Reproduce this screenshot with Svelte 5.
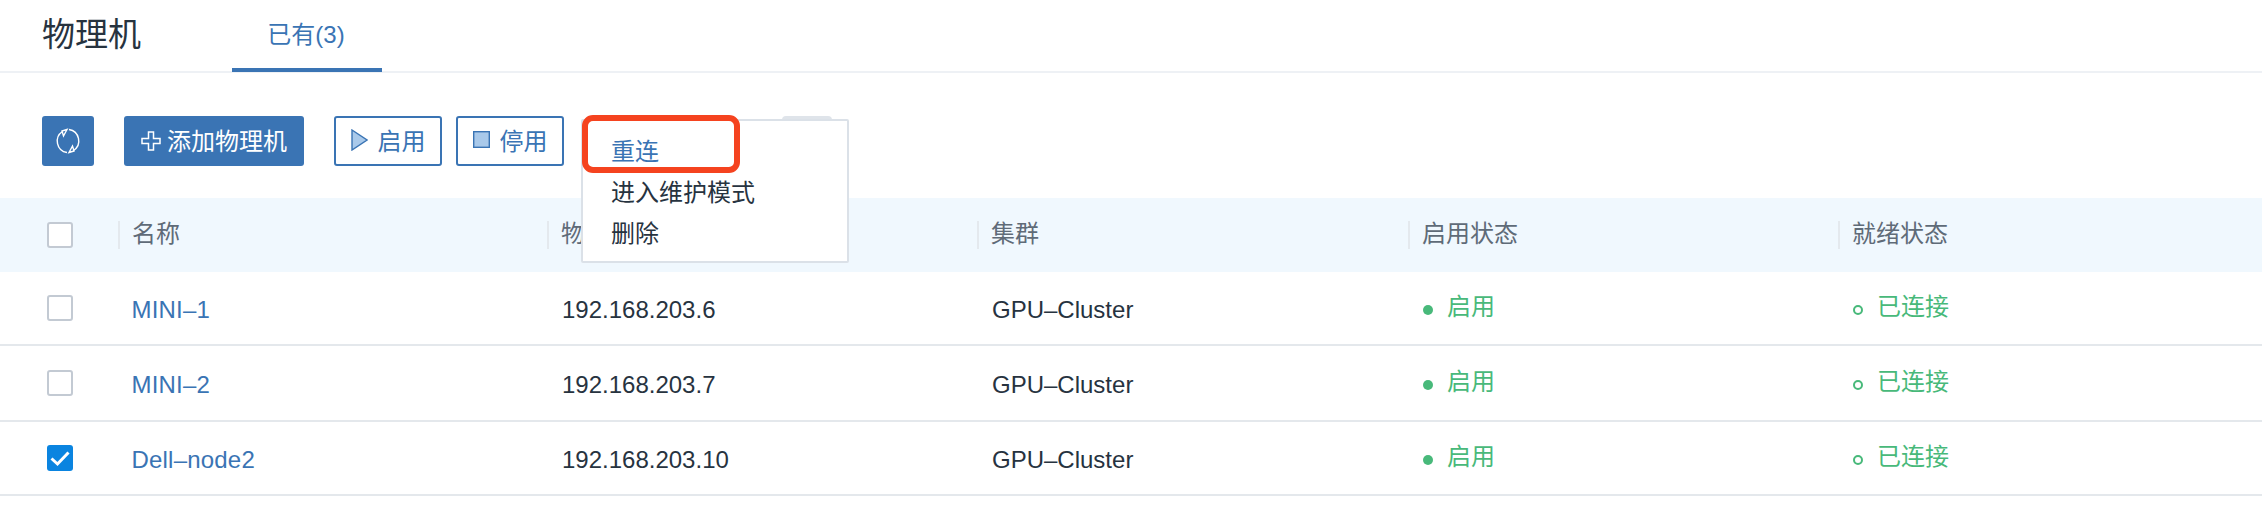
<script>
  const columns = ['名称', '物理机IP', '集群', '启用状态', '就绪状态']
  const hosts = [
    { name: 'MINI–1', ip: '192.168.203.6', checked: false },
    { name: 'MINI–2', ip: '192.168.203.7', checked: false },
    { name: 'Dell–node2', ip: '192.168.203.10', checked: true },
  ]
  const menu = ['重连', '进入维护模式', '删除']
</script>

<div class="page">
  <header class="head">
    <h1>物理机</h1>
    <div class="tab">已有(3)</div>
  </header>

  <div class="toolbar">
    <button class="btn solid refresh" aria-label="刷新">
      <svg width="26" height="26" viewBox="0 0 26 26" fill="none" stroke="#fff" stroke-width="1.4">
        <path d="M7.500 3.500A11.500 11.500 0 0 0 12 24.500" />
        <path d="M18.500 22.500A11.500 11.500 0 0 0 14 1.500" />
        <path d="M12 1.500 7 3 8.500 8z" />
        <path d="M14 24.500 19 23 17.500 18z" />
      </svg>
    </button>
    <button class="btn solid add">
      <svg width="20" height="20" viewBox="0 0 20 20" fill="none" stroke="#fff" stroke-width="1.500">
        <path d="M7.500 1h5v6.500H19v5h-6.500V19h-5v-6.500H1v-5h6.500z" />
      </svg>
      <span>添加物理机</span>
    </button>
    <button class="btn outline">
      <svg width="17" height="22" viewBox="0 0 17 22"><path d="M1 1 16 11 1 21z" fill="#a9c9ea" stroke="#3a74b4" stroke-width="1.400" /></svg>
      <span>启用</span>
    </button>
    <button class="btn outline">
      <svg width="17" height="17" viewBox="0 0 17 17"><rect x="0.700" y="0.700" width="15.600" height="15.600" fill="#a9c9ea" stroke="#3a74b4" stroke-width="1.400" /></svg>
      <span>停用</span>
    </button>
    <div class="more-edge"></div>
    <div class="menu">
      {#each menu as item, i}
        <div class="item" class:active={i === 0}>{item}</div>
      {/each}
    </div>
    <div class="mark"></div>
  </div>

  <div class="table">
    <div class="row th">
      <div class="check-cell"><span class="check"></span></div>
      {#each columns as col}
        <div class="cell"><span class="label">{col}</span></div>
      {/each}
    </div>
    {#each hosts as host}
      <div class="row">
        <div class="check-cell">
          <span class="check" class:on={host.checked}>
            {#if host.checked}
              <svg width="26" height="26" viewBox="0 0 26 26" fill="none" stroke="#fff" stroke-width="3"><path d="M4.500 13.500 10.500 19 21.500 7.500" /></svg>
            {/if}
          </span>
        </div>
        <div class="cell latin"><a href="#host">{host.name}</a></div>
        <div class="cell latin">{host.ip}</div>
        <div class="cell latin">GPU–Cluster</div>
        <div class="cell green"><i class="dot"></i><span class="label">启用</span></div>
        <div class="cell green"><i class="dot ring"></i><span class="label">已连接</span></div>
      </div>
    {/each}
  </div>
</div>

<style>
  :global(body) { margin: 0; background: #fff; }
  .page { font-family: "Liberation Sans", "Noto Sans CJK SC", sans-serif; font-size: 24px; color: #27333f; height: 510px; overflow: hidden; }

  .head { display: flex; align-items: flex-start; height: 71px; border-bottom: 2px solid #eef1f5; padding-left: 42px; }
  h1 { margin: 0; font-size: 33px; font-weight: 400; line-height: 70px; width: 190px; }
  .tab { width: 150px; height: 72px; box-sizing: border-box; border-bottom: 4px solid #3a74b4; padding-right: 2px; color: #3a74b4; text-align: center; line-height: 70px; }

  .toolbar { position: relative; display: flex; gap: 14px; padding: 43px 0 32px 42px; height: 50px; }
  .btn { display: flex; align-items: center; justify-content: center; height: 50px; box-sizing: border-box; border-radius: 3px; font: inherit; padding: 0; }
  .btn span { padding-bottom: 3px; }
  .solid { background: #3a74b4; border: none; color: #fff; }
  .refresh { width: 52px; margin-right: 16px; }
  .add { width: 180px; margin-right: 16px; gap: 6px; }
  .outline { width: 108px; background: #fff; border: 2px solid #3a74b4; color: #3a74b4; gap: 10px; }
  .outline svg { margin-bottom: 3px; }

  .more-edge { position: absolute; left: 782px; top: 43px; width: 50px; height: 6px; background: #dfe4ea; border-radius: 4px 4px 0 0; }
  .menu { position: absolute; left: 581px; top: 46px; width: 268px; height: 144px; box-sizing: border-box; background: #fff; border: 2px solid #dbe1e8; border-radius: 2px; padding: 10px 0 0 28px; z-index: 2; }
  .item { height: 41px; line-height: 41px; }
  .item.active { color: #3a74b4; }
  .mark { position: absolute; left: 582px; top: 42px; width: 158px; height: 58px; box-sizing: border-box; border: 6px solid #f5431f; border-radius: 11px; z-index: 3; }

  .row { display: grid; grid-template-columns: 118px 429px 430px 431px 430px 1fr; align-items: center; height: 76px; box-sizing: border-box; border-bottom: 2px solid #e4e8ec; }
  .row:nth-child(2), .row:nth-child(4) { height: 74px; }
  .th { height: 74px; background: #f0f8fe; border-bottom: none; color: #5f6b78; }
  .check-cell { padding-left: 47px; display: flex; }
  .check { width: 26px; height: 26px; box-sizing: border-box; border: 2px solid #c3cad3; border-radius: 3px; background: #fff; display: block; }
  .check.on { background: #0a84e0; border: none; }
  .cell { padding-left: 15px; display: flex; align-items: center; white-space: nowrap; }
  .th .cell { height: 28px; border-left: 2px solid #e4e9ee; padding-left: 12px; }
  .label { padding-bottom: 7px; }
  .latin { padding-top: 4px; }
  a { color: #3a74b4; text-decoration: none; margin-left: -1.500px; letter-spacing: 0.200px; }
  .green { color: #48b97a; }
  .dot { width: 10px; height: 10px; border-radius: 50%; background: #48b97a; margin: 4px 14px 0 0; box-sizing: border-box; }
  .dot.ring { background: none; border: 2px solid #48b97a; }
</style>
